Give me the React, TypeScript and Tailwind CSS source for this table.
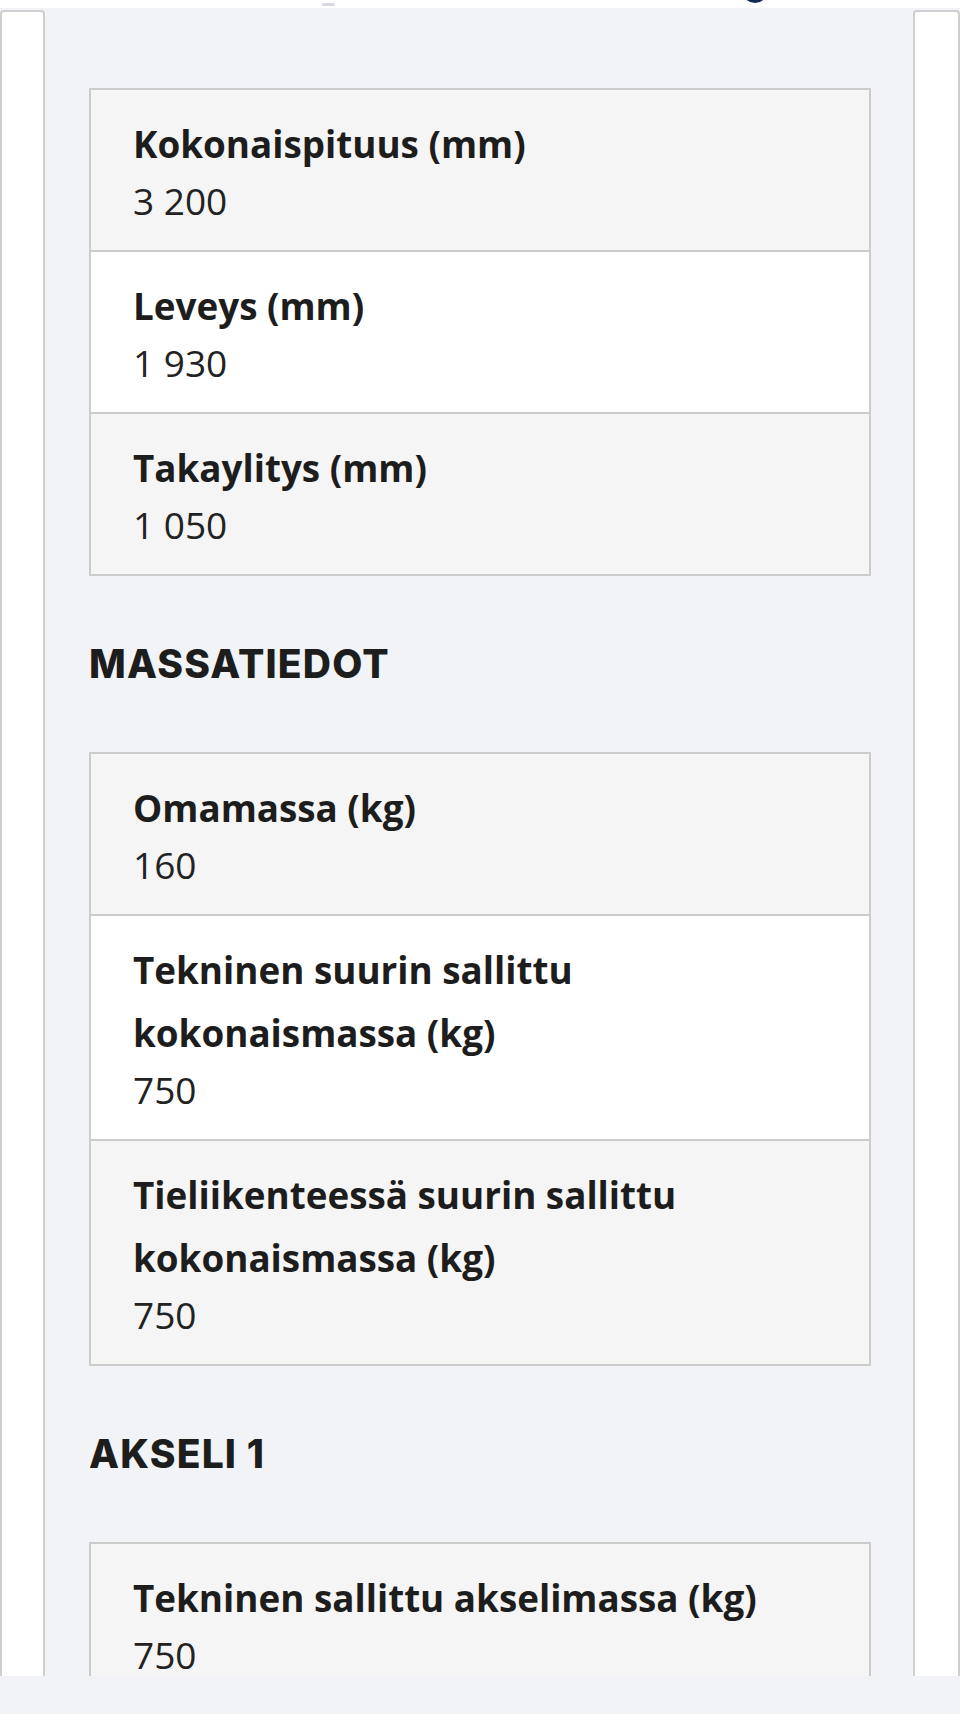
type Row = { label: string[]; value: string }

const mitat: Row[] = [
  { label: ['Kokonaispituus (mm)'], value: '3 200' },
  { label: ['Leveys (mm)'], value: '1 930' },
  { label: ['Takaylitys (mm)'], value: '1 050' },
]

const massat: Row[] = [
  { label: ['Omamassa (kg)'], value: '160' },
  { label: ['Tekninen suurin sallittu', 'kokonaismassa (kg)'], value: '750' },
  { label: ['Tieliikenteessä suurin sallittu', 'kokonaismassa (kg)'], value: '750' },
]

const akseli: Row[] = [{ label: ['Tekninen sallittu akselimassa (kg)'], value: '750' }]

function DataCard({ rows }: { rows: Row[] }) {
  return (
    <div className="border-2 border-[#cbcbcb]">
      {rows.map((row, i) => (
        <div
          key={row.label.join(' ')}
          className={`pl-[42px] pr-6 pt-[23px] pb-[25px] ${i > 0 ? 'border-t-2 border-[#cbcbcb]' : ''} ${
            i % 2 === 0 ? 'bg-[#f5f5f5]' : 'bg-white'
          }`}
        >
          <div className="text-[36.8px] font-bold leading-[63px] text-[#1d1d1d]">
            {row.label.map((line) => (
              <div key={line}>{line}</div>
            ))}
          </div>
          <div className="text-[37px] leading-[49px] text-[#222]">{row.value}</div>
        </div>
      ))}
    </div>
  )
}

function SectionTitle({ children }: { children: string }) {
  return (
    <h2 className="mt-[63px] mb-[63px] font-['Inter','Liberation_Sans',sans-serif] text-[39px] font-extrabold leading-[50px] tracking-[0.03em] text-[#1d1d1d]">
      {children}
    </h2>
  )
}

export default function App() {
  return (
    <div className="relative h-[1714px] w-[960px] overflow-hidden bg-white font-['Open_Sans','Noto_Sans',sans-serif]">
      {/* bits of the header above the fold */}
      <div className="relative h-[8px] bg-white">
        <div className="absolute left-[742px] top-[-23px] h-[26px] w-[26px] rounded-full bg-[#14275a]" />
        <div className="absolute left-[322px] top-[3px] h-[3px] w-[13px] rounded-full bg-[#d6d9df]" />
      </div>

      <div className="bg-[#f2f3f6]">
        <div className="flex h-[1668px] overflow-hidden pt-[2px]">
          <div className="w-[45px] shrink-0 rounded-t-[4px] border-x-2 border-t-2 border-[#cfcfcf] bg-white" />

          <main className="min-w-0 flex-1 pl-[44px] pr-[42px] pt-[78px]">
            <DataCard rows={mitat} />
            <SectionTitle>MASSATIEDOT</SectionTitle>
            <DataCard rows={massat} />
            <SectionTitle>AKSELI 1</SectionTitle>
            <DataCard rows={akseli} />
          </main>

          <div className="w-[47px] shrink-0 rounded-t-[4px] border-x-2 border-t-2 border-[#cfcfcf] bg-white" />
        </div>
        <div className="h-[38px]" />
      </div>
    </div>
  )
}
